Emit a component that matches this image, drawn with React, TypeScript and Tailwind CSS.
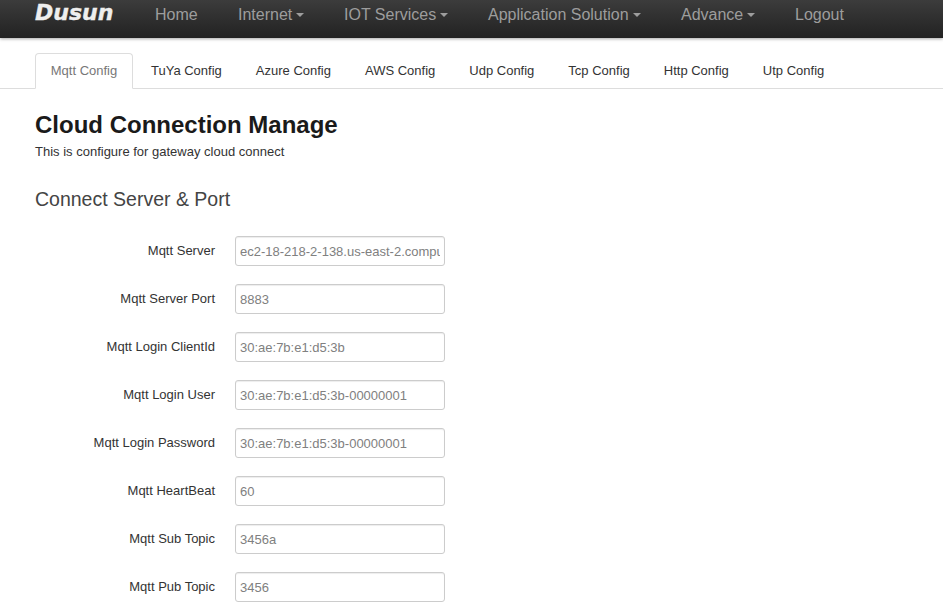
const navItems = [
  { label: 'Home', caret: false, width: 'w-[83px]' },
  { label: 'Internet', caret: true, width: 'w-[106px]' },
  { label: 'IOT Services', caret: true, width: 'w-[144px]' },
  { label: 'Application Solution', caret: true, width: 'w-[193px]' },
  { label: 'Advance', caret: true, width: 'w-[114px]' },
  { label: 'Logout', caret: false, width: 'w-[90px]' },
];

const tabs = ['TuYa Config', 'Azure Config', 'AWS Config', 'Udp Config', 'Tcp Config', 'Http Config', 'Utp Config'];

const fields = [
  { label: 'Mqtt Server', value: 'ec2-18-218-2-138.us-east-2.compute.amazonaws.com' },
  { label: 'Mqtt Server Port', value: '8883' },
  { label: 'Mqtt Login ClientId', value: '30:ae:7b:e1:d5:3b' },
  { label: 'Mqtt Login User', value: '30:ae:7b:e1:d5:3b-00000001' },
  { label: 'Mqtt Login Password', value: '30:ae:7b:e1:d5:3b-00000001' },
  { label: 'Mqtt HeartBeat', value: '60' },
  { label: 'Mqtt Sub Topic', value: '3456a' },
  { label: 'Mqtt Pub Topic', value: '3456' },
];

const App = () => {
  return (
    <div className="h-[614px] overflow-hidden bg-white font-['Liberation_Sans',Arial,sans-serif] text-[14px] text-[#333]">
      {/* top navbar */}
      <nav className="flex h-[38px] items-center bg-gradient-to-b from-[#3c3c3c] to-[#222] pl-[35px] shadow-[0_1px_3px_rgba(0,0,0,0.35)]">
        <span className="-mt-[13px] w-[99px] font-['DejaVu_Sans',sans-serif] text-[22px] leading-[24px] font-bold italic text-[#eeeeee] [-webkit-text-stroke:0.4px_#eeeeee]">Dusun</span>
        <div className="-mt-[9px] flex items-center">
          {navItems.map((item) => (
            <div key={item.label} className={`${item.width} flex shrink-0 items-center gap-[4px] pl-[21px] text-[16px] leading-[22px] text-[#9d9d9d]`}>
              <span>{item.label}</span>
              {item.caret && <span className="mt-[1px] h-0 w-0 border-x-[4px] border-t-[4px] border-x-transparent border-t-[#9d9d9d]" />}
            </div>
          ))}
        </div>
      </nav>

      {/* tabs */}
      <div className="mt-[15px] flex h-[36px] items-stretch border-b border-[#ddd] pl-[35px] text-[13px]">
        <div className="-mb-px flex w-[98px] items-center justify-center rounded-t-[4px] border border-b-white border-[#ddd] bg-white text-[#777]">Mqtt Config</div>
        <div className="flex items-center gap-[34px] pl-[18px] text-[#333]">
          {tabs.map((tab) => (
            <span key={tab}>{tab}</span>
          ))}
        </div>
      </div>

      <div className="pl-[35px]">
        <h1 className="mt-[21px] text-[24px] leading-[30px] font-bold text-[#1a1a1a]">Cloud Connection Manage</h1>
        <p className="mt-[3px] text-[13px] leading-[18px] text-[#333]">This is configure for gateway cloud connect</p>
        <h3 className="mt-[26px] text-[19.5px] leading-[24px] text-[#444]">Connect Server &amp; Port</h3>

        <form className="mt-[25px] flex flex-col gap-[18px]">
          {fields.map((field) => (
            <div key={field.label} className="flex h-[30px] items-start">
              <label className="w-[180px] shrink-0 pt-[6px] text-right text-[13px] leading-[17px] text-[#333]">{field.label}</label>
              <input
                readOnly
                value={field.value}
                className="ml-[20px] h-[30px] w-[210px] rounded-[3px] border border-[#ccc] bg-white px-[4px] text-[13px] text-[#808080] shadow-[inset_0_1px_1px_rgba(0,0,0,0.075)] outline-none"
              />
            </div>
          ))}
        </form>
      </div>
    </div>
  );
};

export default App;
